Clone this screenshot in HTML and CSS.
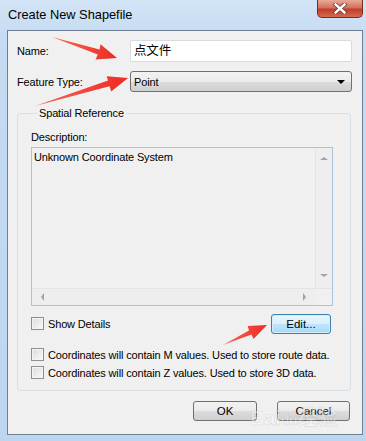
FILE: index.html
```html
<!DOCTYPE html>
<html lang="en">
<head>
    <meta charset="UTF-8">
    <title>Create New Shapefile</title>
    <link rel="stylesheet" href="styles.css">
</head>
<body>
<div class="window">
    <div class="titlebar">
        <span class="title">Create New Shapefile</span>
        <span class="close-btn">
            <svg width="14" height="11" viewBox="0 0 14 11">
                <path d="M2.5 1.5 L11.5 9.5 M11.5 1.5 L2.5 9.5" stroke="#6b4038" stroke-width="4.2" stroke-linecap="square"/>
                <path d="M2.5 1.5 L11.5 9.5 M11.5 1.5 L2.5 9.5" stroke="#ffffff" stroke-width="2.4" stroke-linecap="square"/>
            </svg>
        </span>
    </div>
    <div class="client">
        <div class="field-row">
            <label class="field-label">Name:</label>
            <div class="text-input">点文件</div>
        </div>
        <div class="field-row row-type">
            <label class="field-label">Feature Type:</label>
            <div class="combo">
                <span>Point</span>
                <span class="combo-arrow"></span>
            </div>
        </div>

        <fieldset class="group">
            <legend>Spatial Reference</legend>
            <div class="desc-label">Description:</div>
            <div class="listbox">
                <div class="list-body">
                    <div class="list-text">Unknown Coordinate System</div>
                    <div class="vscroll">
                        <span class="arr arr-up"></span>
                        <span class="arr arr-down"></span>
                    </div>
                </div>
                <div class="hscroll-row">
                    <div class="hscroll">
                        <span class="arr arr-left"></span>
                        <span class="arr arr-right"></span>
                    </div>
                    <div class="corner"></div>
                </div>
            </div>
            <div class="details-row">
                <label class="check"><span class="box"></span>Show Details</label>
                <button class="btn btn-hot">Edit...</button>
            </div>
            <div class="options">
                <label class="check"><span class="box"></span>Coordinates will contain M values. Used to store route data.</label>
                <label class="check"><span class="box"></span>Coordinates will contain Z values. Used to store 3D data.</label>
            </div>
        </fieldset>

        <div class="dialog-buttons">
            <button class="btn btn-ok">OK</button>
            <button class="btn btn-cancel">Cancel</button>
        </div>
    </div>
</div>

<div class="watermark">Bai<span>du</span>经验</div>

<!-- red annotation arrows drawn over the dialog -->
<svg class="arrows" width="366" height="441" viewBox="0 0 366 441">
    <defs>
        <linearGradient id="red" x1="0" y1="0" x2="1" y2="0">
            <stop offset="0" stop-color="#f46a5a"/>
            <stop offset="1" stop-color="#ee2a22"/>
        </linearGradient>
    </defs>
    <polygon fill="url(#red)" points="52,37 99.6,49.4 100.5,44.3 117,58 95.5,59.5 97.8,54.5"/>
    <polygon fill="url(#red)" points="35,106 108,80.5 106.7,76.3 128,78 111.2,91.6 109.5,86.2"/>
    <polygon fill="url(#red)" points="223,345 249,330.5 247.7,326.1 267,325 253.5,338.9 251.5,334.5"/>
</svg>
</body>
</html>
```

FILE: styles.css
```css
body {
    margin: 0;
    width: 366px;
    height: 441px;
    overflow: hidden;
    background: #c2d9f1;
    font-family: 'Liberation Sans', Arial, 'Noto Sans CJK SC', sans-serif;
    font-size: 11px;
    letter-spacing: -0.15px;
    color: #000;
    position: relative;
}

.window {
    display: flex;
    flex-direction: column;
    height: 441px;
    background: linear-gradient(#d3e4f6, #c4dbf2 40px, #bdd5ef);
}

.titlebar {
    height: 30px;
    display: flex;
    justify-content: space-between;
    align-items: flex-start;
}

.title {
    padding: 7px 0 0 8px;
    font-size: 12.8px;
    letter-spacing: 0;
}

.close-btn {
    width: 44px;
    height: 17px;
    margin-right: 3px;
    border: 1px solid #7a2a1f;
    border-top: none;
    border-radius: 0 0 5px 5px;
    background: linear-gradient(#e9a99a, #d5705d 45%, #c23d26 55%, #d66a52);
    display: flex;
    align-items: center;
    justify-content: center;
}

.client {
    margin: 0 3px 6px 7px;
    flex: 1;
    border: 1px solid #6f7f94;
    background: #f0f0f0;
    padding: 9px 10px 0 9px;
}

.field-row {
    display: flex;
    align-items: center;
    height: 22px;
}

.row-type {
    margin-top: 9px;
    height: 21px;
}

.field-label {
    width: 113px;
}

.text-input {
    flex: 1;
    height: 20px;
    border: 1px solid #d7dbe0;
    border-radius: 2px;
    background: #fff;
    padding-left: 3px;
    font-size: 12.5px;
    line-height: 20px;
}

.combo {
    flex: 1;
    height: 19px;
    border: 1px solid #707070;
    border-radius: 3px;
    background: linear-gradient(#f2f2f2, #ebebeb 50%, #dddddd 51%, #cfcfcf);
    display: flex;
    align-items: center;
    justify-content: space-between;
    padding: 0 6px 0 3px;
}

.combo-arrow {
    width: 0;
    height: 0;
    border-left: 4px solid transparent;
    border-right: 4px solid transparent;
    border-top: 4px solid #000;
}

.group {
    min-width: 0;
    margin: 14px 1px 0 0;
    padding: 0 17px 11px 13px;
    border: 1px solid #d5dfe5;
    border-radius: 3px;
}

.group legend {
    margin-left: 6px;
    padding: 0 2px;
    line-height: 14px;
}

.desc-label {
    margin-top: 10px;
    line-height: 14px;
}

.listbox {
    margin-top: 3px;
    height: 157px;
    border: 1px solid #aac3dc;
    display: flex;
    flex-direction: column;
}

.list-body {
    flex: 1;
    display: flex;
}

.list-text {
    flex: 1;
    padding: 3px 0 0 2px;
}

.vscroll {
    width: 16px;
    display: flex;
    flex-direction: column;
    justify-content: space-between;
    align-items: center;
    padding: 9px 0 11px;
    border-left: 1px solid #e4e4e4;
    background: #eeeeee;
}

.hscroll-row {
    height: 16px;
    display: flex;
    border-top: 1px solid #e4e4e4;
}

.hscroll {
    flex: 1;
    display: flex;
    justify-content: space-between;
    align-items: center;
    padding: 0 9px;
    background: #eeeeee;
}

.corner {
    width: 17px;
}

.arr {
    width: 0;
    height: 0;
}

.arr-up {
    border-left: 4px solid transparent;
    border-right: 4px solid transparent;
    border-bottom: 3px solid #a3a3a3;
}

.arr-down {
    border-left: 4px solid transparent;
    border-right: 4px solid transparent;
    border-top: 3px solid #a3a3a3;
}

.arr-left {
    border-top: 4px solid transparent;
    border-bottom: 4px solid transparent;
    border-right: 3px solid #a3a3a3;
}

.arr-right {
    border-top: 4px solid transparent;
    border-bottom: 4px solid transparent;
    border-left: 3px solid #a3a3a3;
}

.details-row {
    margin-top: 8px;
    display: flex;
    justify-content: space-between;
    align-items: center;
    height: 19px;
}

.check {
    display: flex;
    align-items: center;
    gap: 4px;
    white-space: nowrap;
}

.box {
    flex-shrink: 0;
    width: 11px;
    height: 11px;
    border: 1px solid #8e8f8f;
    background: linear-gradient(135deg, #dcdcdc, #fafafa);
    box-shadow: inset 0 0 0 1px #f4f4f4;
}

.options {
    margin-top: 15px;
    display: flex;
    flex-direction: column;
    gap: 5px;
}

.options .check {
    height: 13px;
}

.btn {
    font-family: inherit;
    font-size: 11.5px;
    color: #000;
    height: 20px;
    border: 1px solid #707070;
    border-radius: 3px;
    background: linear-gradient(#f2f2f2, #ebebeb 50%, #dddddd 51%, #cfcfcf);
    padding: 0;
}

.btn-hot {
    width: 60px;
    margin-right: 2px;
    border-color: #3c7fb1;
    background: linear-gradient(#eaf6fd, #d9f0fc 50%, #bee6fd 51%, #a7d9f5);
    box-shadow: inset 0 0 0 1px #d6eefb;
}

.dialog-buttons {
    margin-top: 10px;
    display: flex;
    justify-content: flex-end;
    gap: 20px;
    padding-right: 2px;
}

.btn-ok {
    width: 64px;
}

.btn-cancel {
    width: 73px;
}

.watermark {
    position: absolute;
    left: 250px;
    top: 402px;
    font-size: 20px;
    font-weight: bold;
    color: rgba(255, 255, 255, 0.35);
    -webkit-text-stroke: 0.5px rgba(120, 120, 120, 0.25);
    pointer-events: none;
}

.watermark span {
    font-size: 14px;
}

.arrows {
    position: absolute;
    left: 0;
    top: 0;
    pointer-events: none;
}
```
